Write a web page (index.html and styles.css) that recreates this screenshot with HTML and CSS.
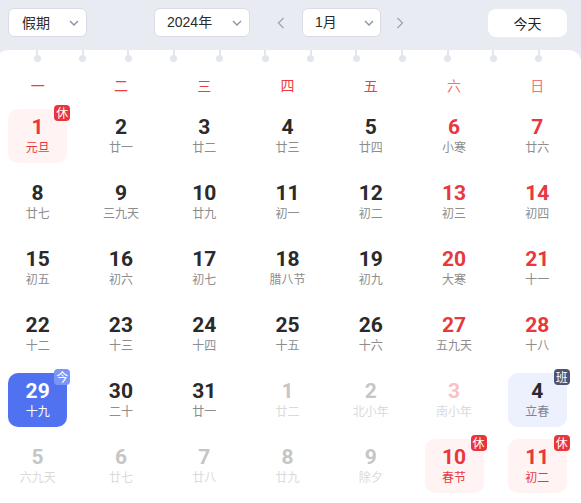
FILE: index.html
```html
<!DOCTYPE html>
<html lang="zh-CN">
<head>
<meta charset="utf-8">
<link rel="stylesheet" href="styles.css">
</head>
<body>
<div class="toolbar">
  <div class="select sel-holiday"><span class="sel-text">假期</span><svg class="chev" viewBox="0 0 10 6"><polyline points="1,1 5,5 9,1"/></svg></div>
  <div class="select sel-year"><span class="sel-text">2024年</span><svg class="chev" viewBox="0 0 10 6"><polyline points="1,1 5,5 9,1"/></svg></div>
  <div class="arrow arrow-prev"><svg viewBox="0 0 8 12"><polyline points="6.5,1 1.5,6 6.5,11"/></svg></div>
  <div class="select sel-month"><span class="sel-text">1月</span><svg class="chev" viewBox="0 0 10 6"><polyline points="1,1 5,5 9,1"/></svg></div>
  <div class="arrow arrow-next"><svg viewBox="0 0 8 12"><polyline points="1.5,1 6.5,6 1.5,11"/></svg></div>
  <div class="spacer"></div>
  <div class="btn-today">今天</div>
</div>
<div class="card">
  <div class="rings">
    <i class="ring"></i><i class="ring"></i><i class="ring"></i><i class="ring"></i><i class="ring"></i><i class="ring"></i>
    <i class="ring"></i><i class="ring"></i><i class="ring"></i><i class="ring"></i><i class="ring"></i><i class="ring"></i>
  </div>
  <div class="weekdays">
    <span>一</span><span>二</span><span>三</span><span>四</span><span>五</span><span class="we">六</span><span class="we">日</span>
  </div>
  <div class="grid">
    <div class="day holiday"><span class="num">1</span><span class="lunar">元旦</span><span class="badge rest">休</span></div>
    <div class="day"><span class="num">2</span><span class="lunar">廿一</span></div>
    <div class="day"><span class="num">3</span><span class="lunar">廿二</span></div>
    <div class="day"><span class="num">4</span><span class="lunar">廿三</span></div>
    <div class="day"><span class="num">5</span><span class="lunar">廿四</span></div>
    <div class="day wknd"><span class="num">6</span><span class="lunar">小寒</span></div>
    <div class="day wknd"><span class="num">7</span><span class="lunar">廿六</span></div>

    <div class="day"><span class="num">8</span><span class="lunar">廿七</span></div>
    <div class="day"><span class="num">9</span><span class="lunar">三九天</span></div>
    <div class="day"><span class="num">10</span><span class="lunar">廿九</span></div>
    <div class="day"><span class="num">11</span><span class="lunar">初一</span></div>
    <div class="day"><span class="num">12</span><span class="lunar">初二</span></div>
    <div class="day wknd"><span class="num">13</span><span class="lunar">初三</span></div>
    <div class="day wknd"><span class="num">14</span><span class="lunar">初四</span></div>

    <div class="day"><span class="num">15</span><span class="lunar">初五</span></div>
    <div class="day"><span class="num">16</span><span class="lunar">初六</span></div>
    <div class="day"><span class="num">17</span><span class="lunar">初七</span></div>
    <div class="day"><span class="num">18</span><span class="lunar">腊八节</span></div>
    <div class="day"><span class="num">19</span><span class="lunar">初九</span></div>
    <div class="day wknd"><span class="num">20</span><span class="lunar">大寒</span></div>
    <div class="day wknd"><span class="num">21</span><span class="lunar">十一</span></div>

    <div class="day"><span class="num">22</span><span class="lunar">十二</span></div>
    <div class="day"><span class="num">23</span><span class="lunar">十三</span></div>
    <div class="day"><span class="num">24</span><span class="lunar">十四</span></div>
    <div class="day"><span class="num">25</span><span class="lunar">十五</span></div>
    <div class="day"><span class="num">26</span><span class="lunar">十六</span></div>
    <div class="day wknd"><span class="num">27</span><span class="lunar">五九天</span></div>
    <div class="day wknd"><span class="num">28</span><span class="lunar">十八</span></div>

    <div class="day today"><span class="num">29</span><span class="lunar">十九</span><span class="badge now">今</span></div>
    <div class="day"><span class="num">30</span><span class="lunar">二十</span></div>
    <div class="day"><span class="num">31</span><span class="lunar">廿一</span></div>
    <div class="day out"><span class="num">1</span><span class="lunar">廿二</span></div>
    <div class="day out"><span class="num">2</span><span class="lunar">北小年</span></div>
    <div class="day out wknd"><span class="num">3</span><span class="lunar">南小年</span></div>
    <div class="day work"><span class="num">4</span><span class="lunar">立春</span><span class="badge duty">班</span></div>

    <div class="day out"><span class="num">5</span><span class="lunar">六九天</span></div>
    <div class="day out"><span class="num">6</span><span class="lunar">廿七</span></div>
    <div class="day out"><span class="num">7</span><span class="lunar">廿八</span></div>
    <div class="day out"><span class="num">8</span><span class="lunar">廿九</span></div>
    <div class="day out"><span class="num">9</span><span class="lunar">除夕</span></div>
    <div class="day holiday"><span class="num">10</span><span class="lunar">春节</span><span class="badge rest">休</span></div>
    <div class="day holiday"><span class="num">11</span><span class="lunar">初二</span><span class="badge rest">休</span></div>
  </div>
</div>
</body>
</html>
```

FILE: styles.css
```css
* { box-sizing: border-box; }

html, body {
  margin: 0;
  padding: 0;
}

body {
  background: #e9ebf2;
  font-family: "Noto Sans CJK SC", "Liberation Sans", sans-serif;
  color: #333;
  width: 581px;
  height: 503px;
  overflow: hidden;
}

.toolbar {
  display: flex;
  align-items: flex-start;
  height: 50px;
  padding: 8px 14px 0 8px;
}

.select {
  display: flex;
  align-items: center;
  justify-content: space-between;
  height: 29px;
  background: #fff;
  border: 1px solid #d9dce4;
  border-radius: 6px;
  font-size: 14px;
  color: #2b2b2b;
}

.sel-text {
  font-family: "Liberation Sans", "Noto Sans CJK SC", sans-serif;
  line-height: 27px;
}

.sel-holiday .sel-text { font-family: "Noto Sans CJK SC", sans-serif; }

.chev {
  width: 10px;
  height: 6px;
  fill: none;
  stroke: #8a90a3;
  stroke-width: 1.3;
}

.sel-holiday {
  width: 79px;
  padding: 0 7px 0 13px;
}

.sel-year {
  width: 96px;
  margin-left: 67px;
  padding: 0 7px 0 12px;
}

.sel-month {
  width: 79px;
  margin-left: 11px;
  padding: 0 6px 0 12px;
}

.arrow {
  width: 20px;
  height: 29px;
  display: flex;
  align-items: center;
  justify-content: center;
}

.arrow svg {
  width: 8px;
  height: 12px;
  fill: none;
  stroke: #a3a7b3;
  stroke-width: 1.4;
}

.arrow-prev { margin-left: 21px; }
.arrow-next { margin-left: 9px; }

.spacer { flex: 1; }

.btn-today {
  width: 79px;
  height: 28px;
  margin-top: 1px;
  background: #fff;
  border-radius: 8px;
  font-size: 14px;
  line-height: 28px;
  text-align: center;
  color: #222;
}

.card {
  margin-left: -4px;
  width: 585px;
  height: 453px;
  background: #fff;
  border-radius: 12px 12px 0 0;
}

.rings {
  display: flex;
  justify-content: space-between;
  padding: 0 38.5px 0 37.5px;
  height: 12px;
}

.ring {
  position: relative;
  width: 7px;
  height: 12px;
}

.ring::before {
  content: "";
  display: block;
  width: 2px;
  height: 6px;
  margin: 0 auto;
  background: #e4e6ee;
}

.ring::after {
  content: "";
  display: block;
  width: 7px;
  height: 7px;
  margin-top: -1px;
  border-radius: 50%;
  background: #e4e6ee;
}

.weekdays {
  display: grid;
  grid-template-columns: repeat(7, 1fr);
  width: 583px;
  height: 47px;
  line-height: 47px;
  text-align: center;
  font-size: 14px;
  color: #f03c3c;
}

.weekdays .we { color: #f47474; }

.grid {
  display: grid;
  grid-template-columns: repeat(7, 1fr);
  width: 583px;
  row-gap: 12px;
  justify-items: center;
}

.day {
  position: relative;
  width: 59px;
  height: 54px;
  border-radius: 10px;
  padding-top: 7px;
  display: flex;
  flex-direction: column;
  align-items: center;
}

.num {
  font-family: Roboto, "Liberation Sans", sans-serif;
  font-weight: 700;
  font-size: 21px;
  line-height: 23px;
  color: #2a2a2a;
}

.lunar {
  font-size: 12px;
  line-height: 16px;
  color: #8d8d8d;
  white-space: nowrap;
}

.wknd .num { color: #e8383d; }

.out .num { color: #c6c6c6; }
.out .lunar { color: #dadada; }
.out.wknd .num { color: #f8c2c2; }

.holiday { background: #fff4f3; }
.holiday .num, .holiday .lunar { color: #e8383d; }

.today { background: #5172f0; }
.today .num, .today .lunar { color: #fff; }

.work { background: #edf0fd; }
.work .num { color: #2a2a2a; }
.work .lunar { color: #7f8494; }

.badge {
  position: absolute;
  top: -4px;
  right: -3px;
  width: 16px;
  height: 16px;
  border-radius: 4px;
  font-size: 12px;
  line-height: 16px;
  text-align: center;
  color: #fff;
}

.badge.rest { background: #e8353b; }
.badge.now { background: #7b95f6; }
.badge.duty { background: #4b5473; }
```
